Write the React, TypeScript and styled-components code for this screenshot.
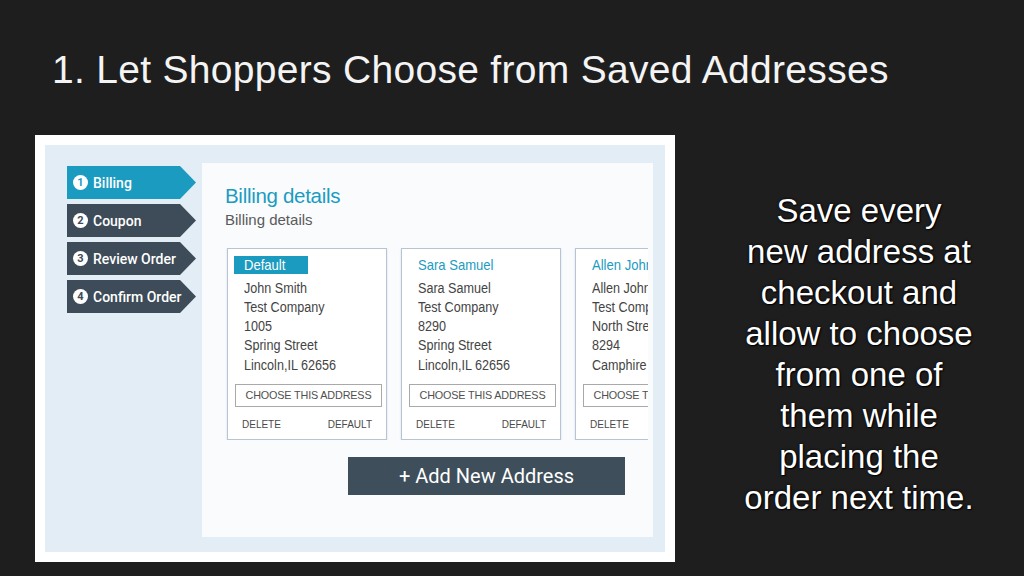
import styled, { createGlobalStyle } from 'styled-components';

const GlobalStyle = createGlobalStyle`
  html, body {
    margin: 0;
    padding: 0;
    background: #1e1e1e;
  }
  body {
    font-family: 'Liberation Sans', Arial, sans-serif;
  }
`;

const TEAL = '#1b9bc0';
const SLATE = '#3d4c58';

const Page = styled.div`
  width: 1024px;
  height: 576px;
  overflow: hidden;
  background: #1e1e1e;
  display: flex;
  flex-direction: column;
`;

const Title = styled.h1`
  margin: 0;
  padding: 50px 0 0 52px;
  font-size: 39px;
  line-height: 39px;
  font-weight: 400;
  letter-spacing: 0.3px;
  color: #f4f4f4;
  white-space: nowrap;
`;

const Content = styled.div`
  display: flex;
  margin-top: 46px;
  padding-left: 35px;
`;

const Frame = styled.div`
  width: 640px;
  height: 427px;
  box-sizing: border-box;
  padding: 10px;
  background: #ffffff;
  flex-shrink: 0;
`;

const Board = styled.div`
  display: flex;
  height: 100%;
  box-sizing: border-box;
  padding: 18px 12px 15px 22px;
  background: #e3edf5;
`;

const Sidebar = styled.div`
  display: flex;
  flex-direction: column;
  gap: 5px;
  width: 129px;
  margin-top: 3px;
  flex-shrink: 0;
`;

const Step = styled.div<{ $active?: boolean }>`
  height: 33px;
  display: flex;
  align-items: center;
  gap: 5px;
  padding-left: 6px;
  background: ${(p) => (p.$active ? TEAL : SLATE)};
  clip-path: polygon(0 0, calc(100% - 16px) 0, 100% 50%, calc(100% - 16px) 100%, 0 100%);
  color: #ffffff;
  font-family: Roboto, 'Liberation Sans', sans-serif;
  font-weight: 500;
  font-size: 14px;
  white-space: nowrap;
`;

const StepNum = styled.span<{ $active?: boolean }>`
  width: 15px;
  height: 15px;
  border-radius: 50%;
  background: #ffffff;
  color: ${(p) => (p.$active ? TEAL : SLATE)};
  font-size: 11px;
  font-weight: 700;
  display: flex;
  align-items: center;
  justify-content: center;
`;

const Panel = styled.div`
  flex: 1;
  margin-left: 6px;
  padding: 21px 5px 0 23px;
  background: #f9fbfd;
  overflow: hidden;
  display: flex;
  flex-direction: column;
`;

const Heading = styled.div`
  font-size: 20.5px;
  line-height: 24px;
  letter-spacing: -0.3px;
  color: ${TEAL};
`;

const SubHeading = styled.div`
  margin-top: 3px;
  font-size: 15px;
  line-height: 18px;
  color: #5a5a5a;
`;

const CardRow = styled.div`
  display: flex;
  gap: 14px;
  margin-top: 19px;
  padding-left: 2px;
  overflow: hidden;
`;

const Card = styled.div`
  width: 160px;
  height: 192px;
  box-sizing: border-box;
  flex-shrink: 0;
  display: flex;
  flex-direction: column;
  padding: 7px 6px;
  background: #ffffff;
  border: 1px solid #b8c3d3;
  box-shadow: 0 1px 2px rgba(120, 140, 170, 0.25);
  overflow: hidden;
`;

const CardHead = styled.div<{ $badge?: boolean }>`
  height: 18px;
  line-height: 18px;
  padding-left: 10px;
  width: ${(p) => (p.$badge ? '74px' : 'auto')};
  box-sizing: border-box;
  font-size: 14.5px;
  white-space: nowrap;
  background: ${(p) => (p.$badge ? TEAL : 'transparent')};
  color: ${(p) => (p.$badge ? '#ffffff' : TEAL)};
`;

/* the screenshot's card text is squeezed horizontally */
const Squeezed = styled.span`
  display: inline-block;
  transform: scaleX(0.9);
  transform-origin: left center;
`;

const Lines = styled.div`
  margin-top: 4.5px;
  padding-left: 10px;
`;

const Line = styled.div`
  font-size: 14px;
  line-height: 19.3px;
  color: #444444;
  white-space: nowrap;
`;

const ChooseButton = styled.div`
  margin-top: 9px;
  margin-left: 1px;
  width: 147px;
  height: 23px;
  box-sizing: border-box;
  border: 1px solid #a9a9a9;
  background: #ffffff;
  display: flex;
  align-items: center;
  justify-content: center;
  font-size: 10.8px;
  letter-spacing: -0.15px;
  color: #505050;
  white-space: nowrap;
`;

const Actions = styled.div`
  margin-top: auto;
  height: 16px;
  display: flex;
  align-items: center;
  justify-content: space-between;
  padding: 0 8px;
  font-size: 10px;
  color: #4a4a4a;
`;

const AddButton = styled.div`
  margin-top: 17px;
  margin-left: 123px;
  width: 277px;
  height: 38px;
  flex-shrink: 0;
  display: flex;
  align-items: center;
  justify-content: center;
  background: #3e4e5a;
  color: #ffffff;
  font-family: Roboto, 'Liberation Sans', sans-serif;
  font-size: 20px;
`;

const Blurb = styled.div`
  width: 330px;
  margin-left: 19px;
  padding-top: 55px;
  text-align: center;
  color: #ffffff;
  font-size: 33px;
  line-height: 41px;
  text-shadow: 0 0 3px rgba(0, 0, 0, 0.9), 1px 1px 1px #000;
`;

type Address = {
  head: string;
  badge?: boolean;
  lines: string[];
};

const addresses: Address[] = [
  {
    head: 'Default',
    badge: true,
    lines: ['John Smith', 'Test Company', '1005', 'Spring Street', 'Lincoln,IL 62656'],
  },
  {
    head: 'Sara Samuel',
    lines: ['Sara Samuel', 'Test Company', '8290', 'Spring Street', 'Lincoln,IL 62656'],
  },
  {
    head: 'Allen John',
    lines: ['Allen John', 'Test Company', 'North Street', '8294', 'Camphire'],
  },
];

const steps = ['Billing', 'Coupon', 'Review Order', 'Confirm Order'];

const blurb = [
  'Save every',
  'new address at',
  'checkout and',
  'allow to choose',
  'from one of',
  'them while',
  'placing the',
  'order next time.',
];

const App = () => {
  return (
    <Page>
      <GlobalStyle />
      <Title>1. Let Shoppers Choose from Saved Addresses</Title>
      <Content>
        <Frame>
          <Board>
            <Sidebar>
              {steps.map((s, i) => (
                <Step key={s} $active={i === 0}>
                  <StepNum $active={i === 0}>{i + 1}</StepNum>
                  {s}
                </Step>
              ))}
            </Sidebar>
            <Panel>
              <Heading>Billing details</Heading>
              <SubHeading>Billing details</SubHeading>
              <CardRow>
                {addresses.map((a) => (
                  <Card key={a.head}>
                    <CardHead $badge={a.badge}>
                      <Squeezed>{a.head}</Squeezed>
                    </CardHead>
                    <Lines>
                      {a.lines.map((l, i) => (
                        <Line key={i}>
                          <Squeezed>{l}</Squeezed>
                        </Line>
                      ))}
                    </Lines>
                    <ChooseButton>CHOOSE THIS ADDRESS</ChooseButton>
                    <Actions>
                      <span>DELETE</span>
                      <span>DEFAULT</span>
                    </Actions>
                  </Card>
                ))}
              </CardRow>
              <AddButton>+ Add New Address</AddButton>
            </Panel>
          </Board>
        </Frame>
        <Blurb>
          {blurb.map((l) => (
            <div key={l}>{l}</div>
          ))}
        </Blurb>
      </Content>
    </Page>
  );
};

export default App;
